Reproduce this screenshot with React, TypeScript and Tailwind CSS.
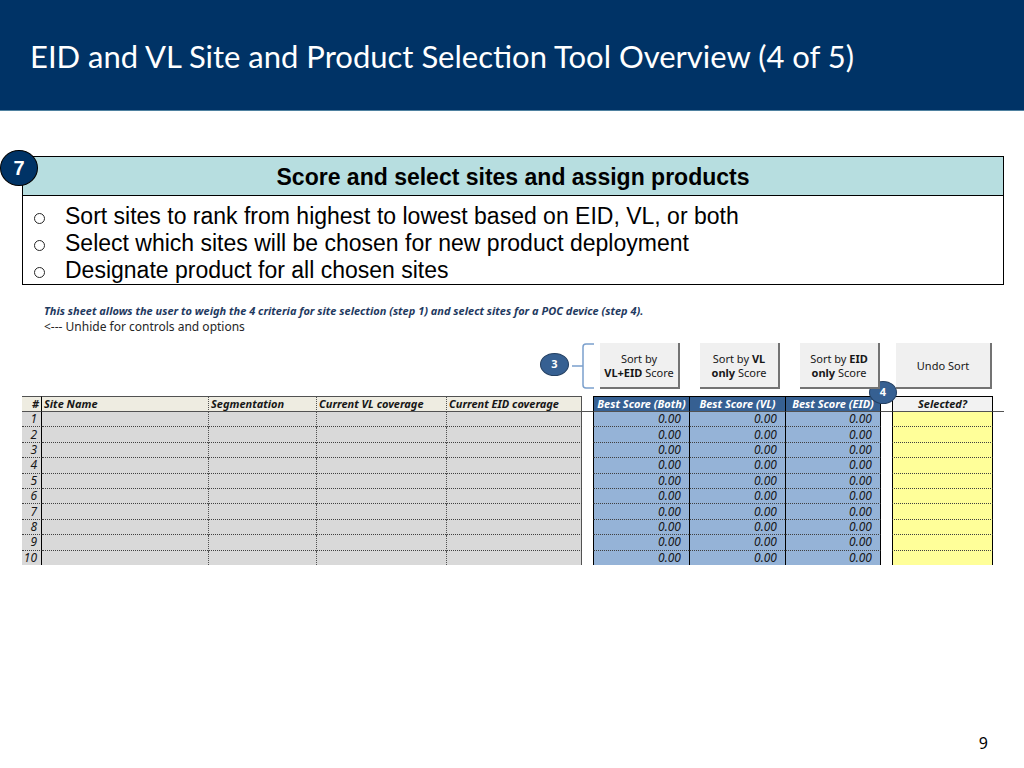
import React from "react";
import clsx from "clsx";

const steps = [
  "Sort sites to rank from highest to lowest based on EID, VL, or both",
  "Select which sites will be chosen for new product deployment",
  "Designate product for all chosen sites",
];

const rows = [1, 2, 3, 4, 5, 6, 7, 8, 9, 10];

const siteHead =
  "border-t border-b border-neutral-600 bg-[#eeece1] px-[2px] text-left";
const scoreHead =
  "border-y border-l border-t-black border-b-neutral-600 border-l-black bg-[#366092] text-center text-white";
const rowLine =
  "group-[:not(:last-child)]:border-b group-[:not(:last-child)]:border-b-neutral-700 group-[:not(:last-child)]:[border-bottom-style:dotted]";
const siteCell = "border-l border-l-neutral-600 [border-left-style:dotted] bg-[#d9d9d9]";
const scoreCell = "border-l border-l-black bg-[#95b3d7] pr-2 text-right";

function SortButton({
  className,
  children,
}: {
  className?: string;
  children: React.ReactNode;
}) {
  return (
    <button
      type="button"
      className={clsx(
        "relative z-10 h-[46px] border-r-2 border-b-2 border-neutral-500 bg-[#f0f0f0] pt-[2px] text-center text-[11px] leading-[14px] whitespace-nowrap text-neutral-900",
        className
      )}
    >
      {children}
    </button>
  );
}

function Header() {
  return (
    <header className="flex h-[111px] items-center border-b border-[#4f81a0] bg-[#003366] px-[30px] pt-[2px]">
      <h1 className="font-['Lato',sans-serif] text-[31px] leading-10 text-white">
        EID and VL Site and Product Selection Tool Overview (4 of 5)
      </h1>
    </header>
  );
}

function StepCard() {
  return (
    <section className="relative border border-black font-['Liberation_Sans',sans-serif] text-[23px] text-black">
      <span className="absolute -top-[7px] -left-[23px] flex h-9 w-[38px] items-center justify-center rounded-[50%] border border-black bg-[#003366] text-xl font-bold text-white">
        7
      </span>
      <h2 className="border-b border-black bg-[#b7dee0] pt-[3px] pb-px text-center leading-[34px] font-bold">
        Score and select sites and assign products
      </h2>
      <ul className="pt-[7px] pl-[11px]">
        {steps.map((step) => (
          <li key={step} className="flex items-center leading-[27px]">
            <span className="mt-1 mr-5 size-[11px] rounded-full border border-neutral-800" />
            {step}
          </li>
        ))}
      </ul>
    </section>
  );
}

function Controls() {
  return (
    <div className="relative flex items-start justify-end pr-3 pb-[7px]">
      <span className="mt-[10px] flex h-[23px] w-[29px] items-center justify-center rounded-[50%] border border-[#244062] bg-[#366092] text-[11px] font-bold text-white">
        3
      </span>
      <svg
        className="mr-[6px] ml-[3px] h-[46px] w-[22px]"
        viewBox="0 0 22 46"
        fill="none"
        stroke="#7ba0cd"
        strokeWidth="1.5"
      >
        <path d="M22 1h-8q-3 0-3 3v38q0 3 3 3h8M0 23h11" />
      </svg>
      <SortButton className="mr-5 w-20">
        Sort by
        <br />
        <b>VL+EID</b> Score
      </SortButton>
      <SortButton className="mr-5 w-20">
        Sort by <b>VL</b>
        <br />
        <b>only</b> Score
      </SortButton>
      <SortButton className="mr-4 w-20">
        Sort by <b>EID</b>
        <br />
        <b>only</b> Score
      </SortButton>
      <SortButton className="w-24">Undo Sort</SortButton>
      <span className="absolute right-[107px] bottom-[-8px] flex h-[23px] w-7 items-center justify-center rounded-[50%] border border-[#244062] bg-[#366092] text-[11px] font-bold text-white">
        4
      </span>
    </div>
  );
}

function SiteTable() {
  return (
    <table className="h-[169px] w-full table-fixed border-separate border-spacing-0 text-xs leading-[14px] text-neutral-900 italic">
      <colgroup>
        <col className="w-5" />
        <col />
        <col className="w-[108px]" />
        <col className="w-[130px]" />
        <col className="w-[136px]" />
        <col className="w-[11px]" />
        <col className="w-24" />
        <col className="w-24" />
        <col className="w-24" />
        <col className="w-[11px]" />
        <col className="w-[101px]" />
        <col className="w-[11px]" />
      </colgroup>
      <thead className="text-[11px] leading-[14px] whitespace-nowrap">
        <tr>
          <th className={clsx(siteHead, "border-r border-r-black text-right")}>#</th>
          <th className={siteHead}>Site Name</th>
          <th className={clsx(siteHead, "border-l [border-left-style:dotted]")}>Segmentation</th>
          <th className={clsx(siteHead, "border-l [border-left-style:dotted]")}>
            Current VL coverage
          </th>
          <th className={clsx(siteHead, "border-x [border-left-style:dotted]")}>
            Current EID coverage
          </th>
          <td className="border-b border-neutral-600" />
          <th className={scoreHead}>Best Score (Both)</th>
          <th className={scoreHead}>Best Score (VL)</th>
          <th className={clsx(scoreHead, "border-r border-r-black")}>Best Score (EID)</th>
          <td className="border-b border-neutral-600" />
          <th className="border border-black border-b-neutral-600 bg-[#f2f2f2]">
            Selected?
          </th>
          <td className="border-b border-neutral-600" />
        </tr>
      </thead>
      <tbody>
        {rows.map((n) => (
          <tr key={n} className="group">
            <td
              className={clsx(
                rowLine,
                "border-r border-r-black bg-[#d9d9d9] pr-1 text-right whitespace-nowrap"
              )}
            >
              {n}
            </td>
            <td className={clsx(rowLine, "bg-[#d9d9d9]")} />
            <td className={clsx(rowLine, siteCell)} />
            <td className={clsx(rowLine, siteCell)} />
            <td className={clsx(rowLine, siteCell, "border-r border-r-neutral-600")} />
            <td />
            <td className={clsx(rowLine, scoreCell)}>0.00</td>
            <td className={clsx(rowLine, scoreCell)}>0.00</td>
            <td className={clsx(rowLine, scoreCell, "border-r border-r-black")}>0.00</td>
            <td />
            <td className={clsx(rowLine, "border-x border-x-black bg-[#ffff99]")} />
            <td />
          </tr>
        ))}
      </tbody>
    </table>
  );
}

function App() {
  return (
    <div className="flex min-h-screen flex-col bg-white">
      <Header />
      <main className="pt-[45px] pr-5 pl-[22px]">
        <StepCard />
        <div className="pt-[18px] font-['Noto_Sans',sans-serif]">
          <div className="pb-2 pl-[22px] leading-4">
            <p className="text-[11px] leading-4 font-bold text-[#1f3a5f] italic">
              This sheet allows the user to weigh the 4 criteria for site
              selection (step 1) and select sites for a POC device (step 4).
            </p>
            <p className="text-xs leading-4 text-neutral-800">
              &lt;--- Unhide for controls and options
            </p>
          </div>
          <Controls />
          <SiteTable />
        </div>
      </main>
      <footer className="mt-auto pr-9 pb-3 text-right font-['Noto_Sans',sans-serif] text-base leading-[26px] text-black">
        9
      </footer>
    </div>
  );
}

export default App;
